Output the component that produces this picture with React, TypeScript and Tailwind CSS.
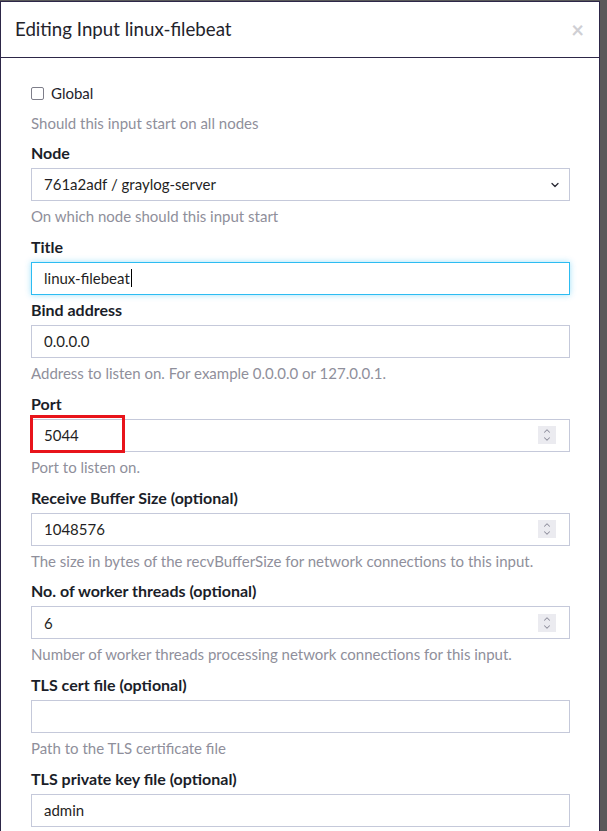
import { ChevronDown, ChevronUp } from "lucide-react";

// Graylog "Editing Input" modal, cropped to the visible part of the form.

type Field = {
  label: string;
  value?: string;
  help?: string;
  kind?: "text" | "select" | "number" | "focus";
  marked?: boolean;
};

const fields: Field[] = [
  { label: "Node", value: "761a2adf / graylog-server", help: "On which node should this input start", kind: "select" },
  { label: "Title", value: "linux-filebeat", kind: "focus" },
  { label: "Bind address", value: "0.0.0.0", help: "Address to listen on. For example 0.0.0.0 or 127.0.0.1." },
  { label: "Port", value: "5044", help: "Port to listen on.", kind: "number", marked: true },
  {
    label: "Receive Buffer Size (optional)",
    value: "1048576",
    help: "The size in bytes of the recvBufferSize for network connections to this input.",
    kind: "number",
  },
  {
    label: "No. of worker threads (optional)",
    value: "6",
    help: "Number of worker threads processing network connections for this input.",
    kind: "number",
  },
  { label: "TLS cert file (optional)", value: "", help: "Path to the TLS certificate file" },
  { label: "TLS private key file (optional)", value: "admin" },
];

function Spinner() {
  return (
    <span className="flex h-[18px] w-[18px] flex-col items-center justify-center bg-[#ebebf0] text-[#8e8e9c]">
      <ChevronUp size={10} strokeWidth={2.5} className="-mb-[1px]" />
      <ChevronDown size={10} strokeWidth={2.5} className="-mt-[1px]" />
    </span>
  );
}

function Control({ field }: { field: Field }) {
  const focused = field.kind === "focus";
  return (
    <div
      className={`flex h-[33px] items-center border pl-[12px] pr-[13px] text-[15px] text-[#1f1f24] ${
        focused
          ? "border-[#2cbcf2] shadow-[0_0_6px_rgba(44,188,242,0.45)]"
          : "border-[#c5c9da]"
      }`}
    >
      <span className="flex-1 whitespace-nowrap">
        {field.value}
        {focused && <span className="ml-px inline-block h-[18px] w-px translate-y-[3px] bg-black" />}
      </span>
      {field.kind === "select" && <ChevronDown size={12} strokeWidth={2.6} className="mr-[-5px] text-[#2a2a35]" />}
      {field.kind === "number" && <Spinner />}
    </div>
  );
}

function FormField({ field }: { field: Field }) {
  return (
    <div className={field.help ? "mb-[10.7px]" : "mb-[5.5px]"}>
      <label className="mb-[5px] block text-[16px] font-bold leading-[20px] text-[#1b1e29]">{field.label}</label>
      <div className="relative">
        <Control field={field} />
        {field.marked && (
          <div className="absolute left-[-1px] top-[-4px] h-[38px] w-[95px] border-[3px] border-[#e8141b]" />
        )}
      </div>
      {field.help && (
        <p className="mt-[5px] text-[15px] leading-[20px] text-[#8f8f9b]">{field.help}</p>
      )}
    </div>
  );
}

export default function App() {
  return (
    <div className="h-[831px] overflow-hidden bg-[#5a5a5a] pt-px font-['Lato',sans-serif]">
      <div className="h-[840px] w-[600px] border-x border-t border-[#2d2748] bg-white">
        <div className="flex h-[56px] items-center justify-between border-b border-[#2d2748] pl-[14px] pr-[15px]">
          <h1 className="text-[18.7px] text-[#23232b]">Editing Input linux-filebeat</h1>
          <span className="text-[22px] font-bold leading-none text-[#cfcfd4]">×</span>
        </div>
        <div className="pl-[30px] pr-[29px] pt-[25px]">
          <label className="flex h-[20px] items-center gap-[7px] text-[15px] text-[#23232b]">
            <span className="h-[13px] w-[13px] rounded-[2px] border border-[#7e7e8a] bg-white" />
            Global
          </label>
          <p className="mb-[10px] mt-[10px] text-[15px] leading-[20px] text-[#8f8f9b]">
            Should this input start on all nodes
          </p>
          {fields.map((f) => (
            <FormField key={f.label} field={f} />
          ))}
        </div>
      </div>
    </div>
  );
}
